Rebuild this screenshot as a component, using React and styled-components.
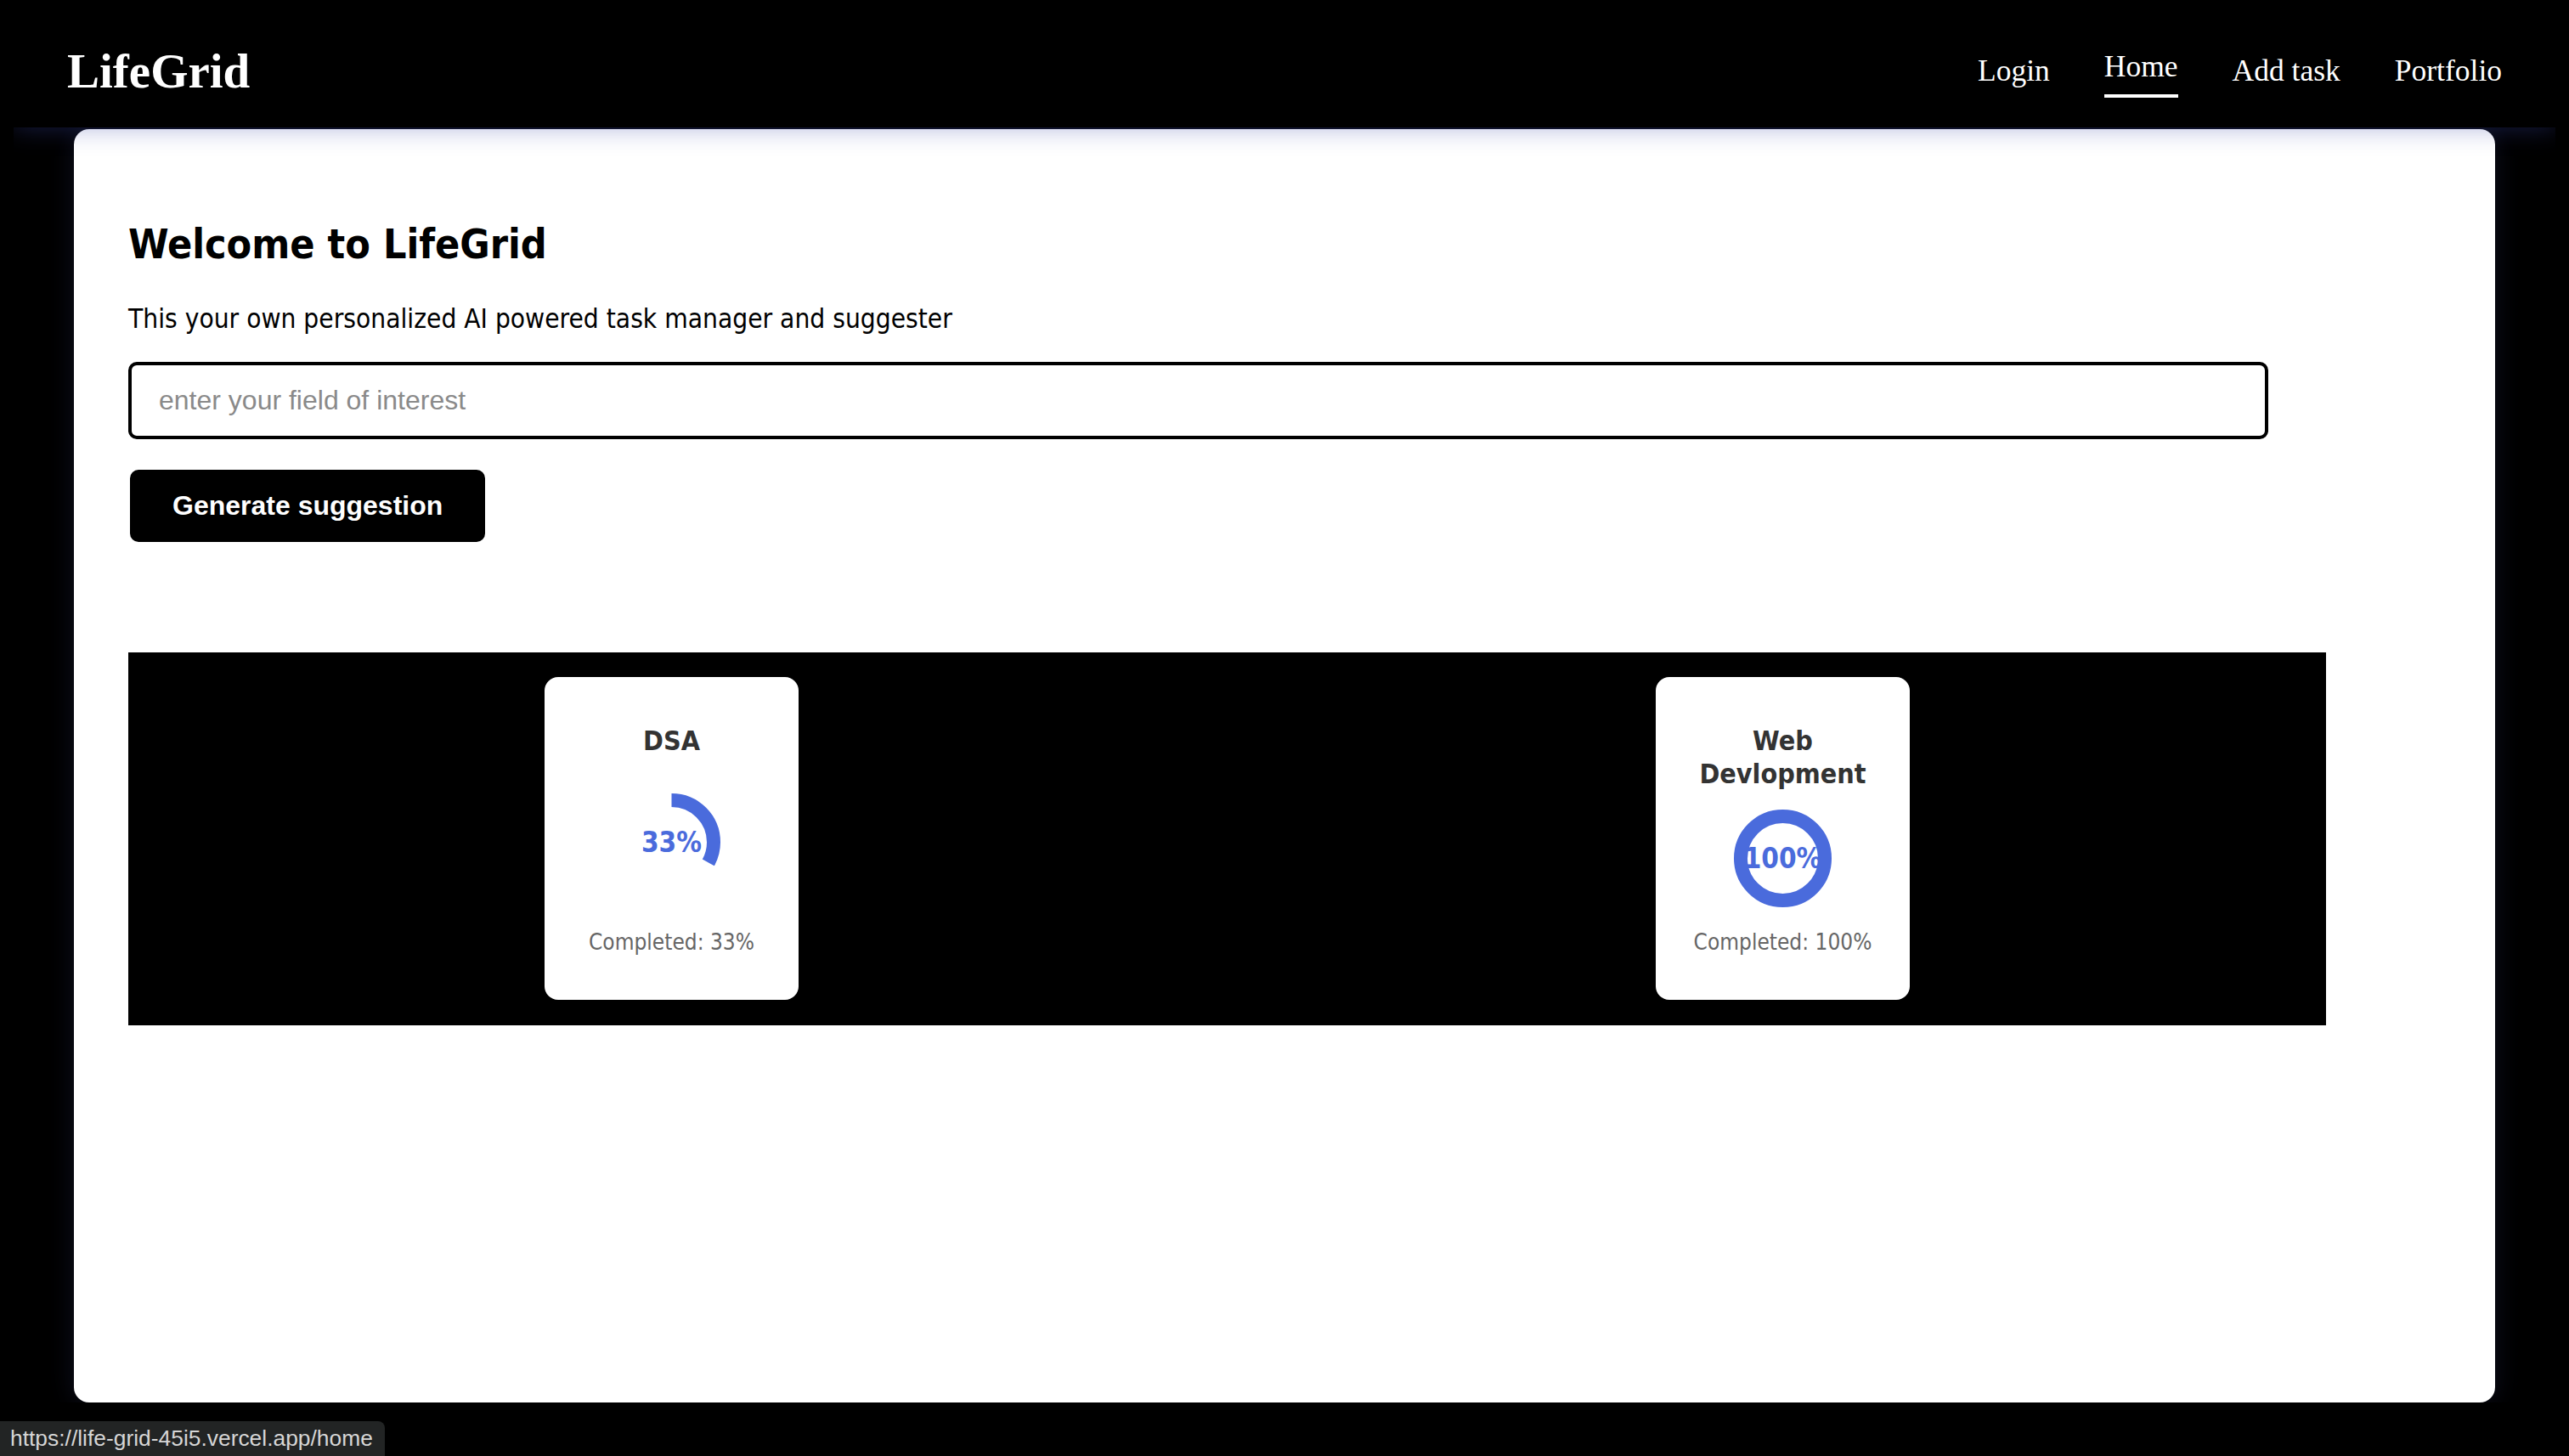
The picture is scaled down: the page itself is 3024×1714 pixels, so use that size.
import React from "react";
import styled, { createGlobalStyle } from "styled-components";

const GlobalStyle = createGlobalStyle`
    * {
        box-sizing: border-box;
    }

    body {
        margin: 16px;
        background-color: #000;
        font-family: "DejaVu Sans Condensed", "DejaVu Sans", sans-serif;
    }
`;

const tahoma = `"DejaVu Sans Condensed", "DejaVu Sans", sans-serif`;

const Navbar = styled.nav`
    position: relative;
    z-index: 1;
    height: 134px;
    padding: 0 63px;
    display: flex;
    justify-content: space-between;
    align-items: center;
    background-color: #000;
    box-shadow: 0 0 28px rgba(60, 72, 170, 0.42);
`;

const Logo = styled.div`
    color: #fff;
    font-family: "Liberation Serif", serif;
    font-weight: bold;
    font-size: 57px;
`;

const NavLinks = styled.div`
    display: flex;
    align-items: center;
    gap: 64px;
`;

const NavLink = styled.a`
    color: #fff;
    text-decoration: none;
    font-family: "Liberation Serif", serif;
    font-size: 35.5px;
    cursor: pointer;
    ${({ $active }) =>
        $active &&
        `
        margin-top: 6px;
        padding-bottom: 12px;
        border-bottom: 4px solid #fff;
    `}
`;

const Main = styled.main`
    margin: 2px 71px 0;
    height: 1499px;
    padding: 66px 64px 0;
    background-color: #fff;
    border-radius: 18px;
    box-shadow: 0 0 30px rgba(80, 90, 180, 0.18);
    font-family: ${tahoma};
`;

const Title = styled.h2`
    margin: 40px 0;
    font-size: 48px;
    line-height: 58px;
    font-weight: bold;
    color: #000;
`;

const Subtitle = styled.p`
    margin: 0 0 32px;
    font-size: 31.4px;
    line-height: 38px;
    color: #000;
`;

const Input = styled.input`
    display: block;
    width: 2519px;
    height: 91px;
    padding: 0 32px;
    border: 4px solid #000;
    border-radius: 10px;
    font-family: "Liberation Sans", Arial, sans-serif;
    font-size: 32px;
    outline: none;

    &::placeholder {
        color: #8a8a8a;
    }
`;

const Button = styled.button`
    display: block;
    margin: 36px 0 0 2px;
    height: 85px;
    padding: 0 50px;
    border: none;
    border-radius: 10px;
    background-color: #000;
    color: #fff;
    font-family: "Liberation Sans", Arial, sans-serif;
    font-weight: bold;
    font-size: 32px;
    cursor: pointer;
`;

const Progress = styled.section`
    margin-top: 130px;
    width: 2587px;
    padding: 29px 490px 30px;
    display: flex;
    justify-content: space-between;
    background-color: #000;
`;

const Card = styled.div`
    width: 299px;
    height: 380px;
    padding: 56px 20px 49px;
    display: flex;
    flex-direction: column;
    justify-content: space-between;
    align-items: center;
    text-align: center;
    background-color: #fff;
    border-radius: 16px;
`;

const CardTitle = styled.h3`
    margin: 0;
    font-size: 32px;
    line-height: 39px;
    font-weight: bold;
    color: #333;
`;

const Ring = styled.div`
    display: grid;
    place-items: center;
    width: 115px;
    height: 115px;

    & > * {
        grid-area: 1 / 1;
    }
`;

const Percent = styled.span`
    font-size: 33px;
    font-weight: bold;
    color: #4a6bdc;
    white-space: nowrap;
`;

const Completed = styled.p`
    margin: 0;
    font-size: 26px;
    line-height: 38px;
    color: #666;
`;

const StatusBar = styled.div`
    position: fixed;
    left: 0;
    bottom: 0;
    height: 41px;
    padding: 0 14px 0 12px;
    line-height: 41px;
    background-color: #222424;
    color: #d6d6d6;
    font-family: "Liberation Sans", Arial, sans-serif;
    font-size: 26.4px;
    border-top-right-radius: 8px;
`;

const ProgressRing = ({ value }) => {
    const r = 49.5;
    const c = 2 * Math.PI * r;

    return (
        <Ring>
            <svg width="115" height="115" viewBox="0 0 115 115">
                <circle
                    cx="57.5"
                    cy="57.5"
                    r={r}
                    fill="none"
                    stroke="#4a6bdc"
                    strokeWidth="16"
                    strokeDasharray={`${(c * value) / 100} ${c}`}
                    transform="rotate(-90 57.5 57.5)"
                />
            </svg>
            <Percent>{value}%</Percent>
        </Ring>
    );
};

const tasks = [
    { name: "DSA", done: 33 },
    { name: "Web Devlopment", done: 100 },
];

const App = () => {
    return (
        <>
            <GlobalStyle />
            <Navbar>
                <Logo>LifeGrid</Logo>
                <NavLinks>
                    <NavLink>Login</NavLink>
                    <NavLink $active>Home</NavLink>
                    <NavLink>Add task</NavLink>
                    <NavLink>Portfolio</NavLink>
                </NavLinks>
            </Navbar>
            <Main>
                <Title>Welcome to LifeGrid</Title>
                <Subtitle>This your own personalized AI powered task manager and suggester</Subtitle>
                <Input placeholder="enter your field of interest" />
                <Button>Generate suggestion</Button>
                <Progress>
                    {tasks.map((task) => (
                        <Card key={task.name}>
                            <CardTitle>{task.name}</CardTitle>
                            <ProgressRing value={task.done} />
                            <Completed>Completed: {task.done}%</Completed>
                        </Card>
                    ))}
                </Progress>
            </Main>
            <StatusBar>https://life-grid-45i5.vercel.app/home</StatusBar>
        </>
    );
};

export default App;
